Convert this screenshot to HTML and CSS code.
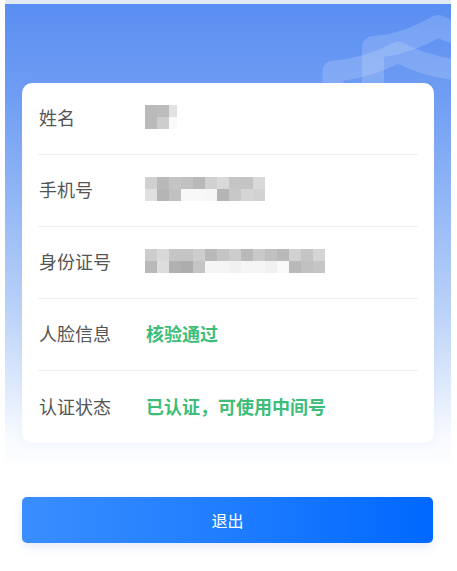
FILE: index.html
```html
<!DOCTYPE html>
<html lang="zh-CN">
<head>
<meta charset="utf-8">
<title>实名信息</title>
<link rel="stylesheet" href="styles.css">
</head>
<body>
<div class="page">
  <svg class="deco" viewBox="300 0 151 200" width="151" height="200" aria-hidden="true">
    <path d="M373,200 L373,47 Q405,45 438,26 Q455,34 475,38" fill="none" stroke="#ffffff" stroke-opacity="0.16" stroke-width="22" stroke-linejoin="round" stroke-linecap="round"/>
    <path d="M333,200 L333,71 Q366,69 398,52 Q425,67 465,71" fill="none" stroke="#ffffff" stroke-opacity="0.16" stroke-width="21" stroke-linejoin="round" stroke-linecap="round"/>
  </svg>

  <div class="card">
    <div class="row">
      <span class="label">姓名</span>
      <div class="mosaic">
        <i style="background:#bababa"></i><i style="background:#bcbcbc"></i><i class="half" style="background:#e2e2e2"></i>
        <i style="background:#bababa"></i><i style="background:#cdcdcd"></i><i class="half" style="background:#f9f9f9"></i>
      </div>
    </div>
    <div class="row">
      <span class="label">手机号</span>
      <div class="mosaic">
        <i style="background:#d0d0d0"></i><i style="background:#b9b9b9"></i><i style="background:#c4c4c4"></i><i style="background:#c1c1c1"></i><i style="background:#b9b9b9"></i><i style="background:#d1d1d1"></i><i style="background:#d9d9d9"></i><i style="background:#c5c5c5"></i><i style="background:#c4c4c4"></i><i style="background:#d9d9d9"></i>
        <i style="background:#e0e0e0"></i><i style="background:#b5b5b5"></i><i style="background:#c1c1c1"></i><i style="background:#f8f8f8"></i><i style="background:#f8f8f8"></i><i style="background:#f6f6f6"></i><i style="background:#b5b5b5"></i><i style="background:#c8c8c8"></i><i style="background:#d5d5d5"></i><i style="background:#d2d2d2"></i>
      </div>
    </div>
    <div class="row">
      <span class="label">身份证号</span>
      <div class="mosaic">
        <i style="background:#cdcdcd"></i><i style="background:#d9d9d9"></i><i style="background:#c5c5c5"></i><i style="background:#c5c5c5"></i><i style="background:#cdcdcd"></i><i style="background:#b9b9b9"></i><i style="background:#c5c5c5"></i><i style="background:#cdcdcd"></i><i style="background:#b9b9b9"></i><i style="background:#c9c9c9"></i><i style="background:#c1c1c1"></i><i style="background:#b9b9b9"></i><i style="background:#d1d1d1"></i><i style="background:#c5c5c5"></i><i style="background:#d5d5d5"></i>
        <i style="background:#b9b9b9"></i><i style="background:#dddddd"></i><i style="background:#b1b1b1"></i><i style="background:#adadad"></i><i style="background:#c5c5c5"></i><i style="background:#f5f5f5"></i><i style="background:#f5f5f5"></i><i style="background:#f1f1f1"></i><i style="background:#f5f5f5"></i><i style="background:#f5f5f5"></i><i style="background:#f1f1f1"></i><i style="background:#f9f9f9"></i><i style="background:#b9b9b9"></i><i style="background:#c1c1c1"></i><i style="background:#c5c5c5"></i>
      </div>
    </div>
    <div class="row">
      <span class="label">人脸信息</span>
      <span class="value ok">核验通过</span>
    </div>
    <div class="row">
      <span class="label">认证状态</span>
      <span class="value ok">已认证，可使用中间号</span>
    </div>
  </div>

  <div class="actions">
    <button class="btn-exit" type="button">退出</button>
  </div>
</div>
</body>
</html>
```

FILE: styles.css
```css
* { box-sizing: border-box; }

html, body {
  margin: 0;
  padding: 0;
  background: #ffffff;
}

body {
  font-family: "Noto Sans CJK SC", "Noto Sans", sans-serif;
  width: 457px;
  height: 571px;
  overflow: hidden;
}

.page {
  position: relative;
  margin: 0 6px 0 5px;
  height: 571px;
  border-top: 4px solid #e2ebf4;
  padding: 79px 17px 0 17px;
  background: linear-gradient(180deg,
    #5a8ef2 0px,
    #6f9df3 90px,
    #94b8f6 200px,
    #bcd3f9 310px,
    #dde9fc 380px,
    #f6f9ff 430px,
    #ffffff 465px);
}

.deco {
  position: absolute;
  top: -4px;
  right: 0;
  overflow: hidden;
}

.card {
  position: relative;
  background: #ffffff;
  border-radius: 10px;
  padding: 0 16px;
  box-shadow: 0 2px 10px rgba(120, 150, 200, 0.06);
}

.row {
  display: flex;
  align-items: center;
  height: 72px;
  padding-bottom: 3px;
  border-bottom: 1px solid #f0f0f0;
}

.row:last-child {
  border-bottom: none;
}

.label {
  width: 107px;
  flex: none;
  font-size: 18px;
  color: #555555;
  line-height: 1;
  padding-left: 1px;
}

.value {
  font-size: 18px;
  line-height: 1;
  font-weight: 700;
  padding-left: 1px;
}

.ok {
  color: #3dbd77;
}

.mosaic {
  display: flex;
  flex-wrap: wrap;
  width: 180px;
}

.row:nth-child(1) .mosaic { width: 32px; }
.row:nth-child(2) .mosaic { width: 120px; }
.row:nth-child(3) .mosaic { width: 180px; }

.mosaic i {
  display: block;
  width: 12px;
  height: 12px;
}

.mosaic i.half {
  width: 8px;
}

.actions {
  margin-top: 54px;
}

.btn-exit {
  display: block;
  width: 411px;
  height: 46px;
  border: none;
  border-radius: 5px;
  background: linear-gradient(90deg, #3a8efe 0%, #1f7dff 50%, #0068ff 100%);
  color: #ffffff;
  font-family: "Noto Sans CJK SC", "Noto Sans", sans-serif;
  font-size: 16px;
  box-shadow: 0 4px 10px rgba(40, 90, 180, 0.12);
  cursor: pointer;
}
```
